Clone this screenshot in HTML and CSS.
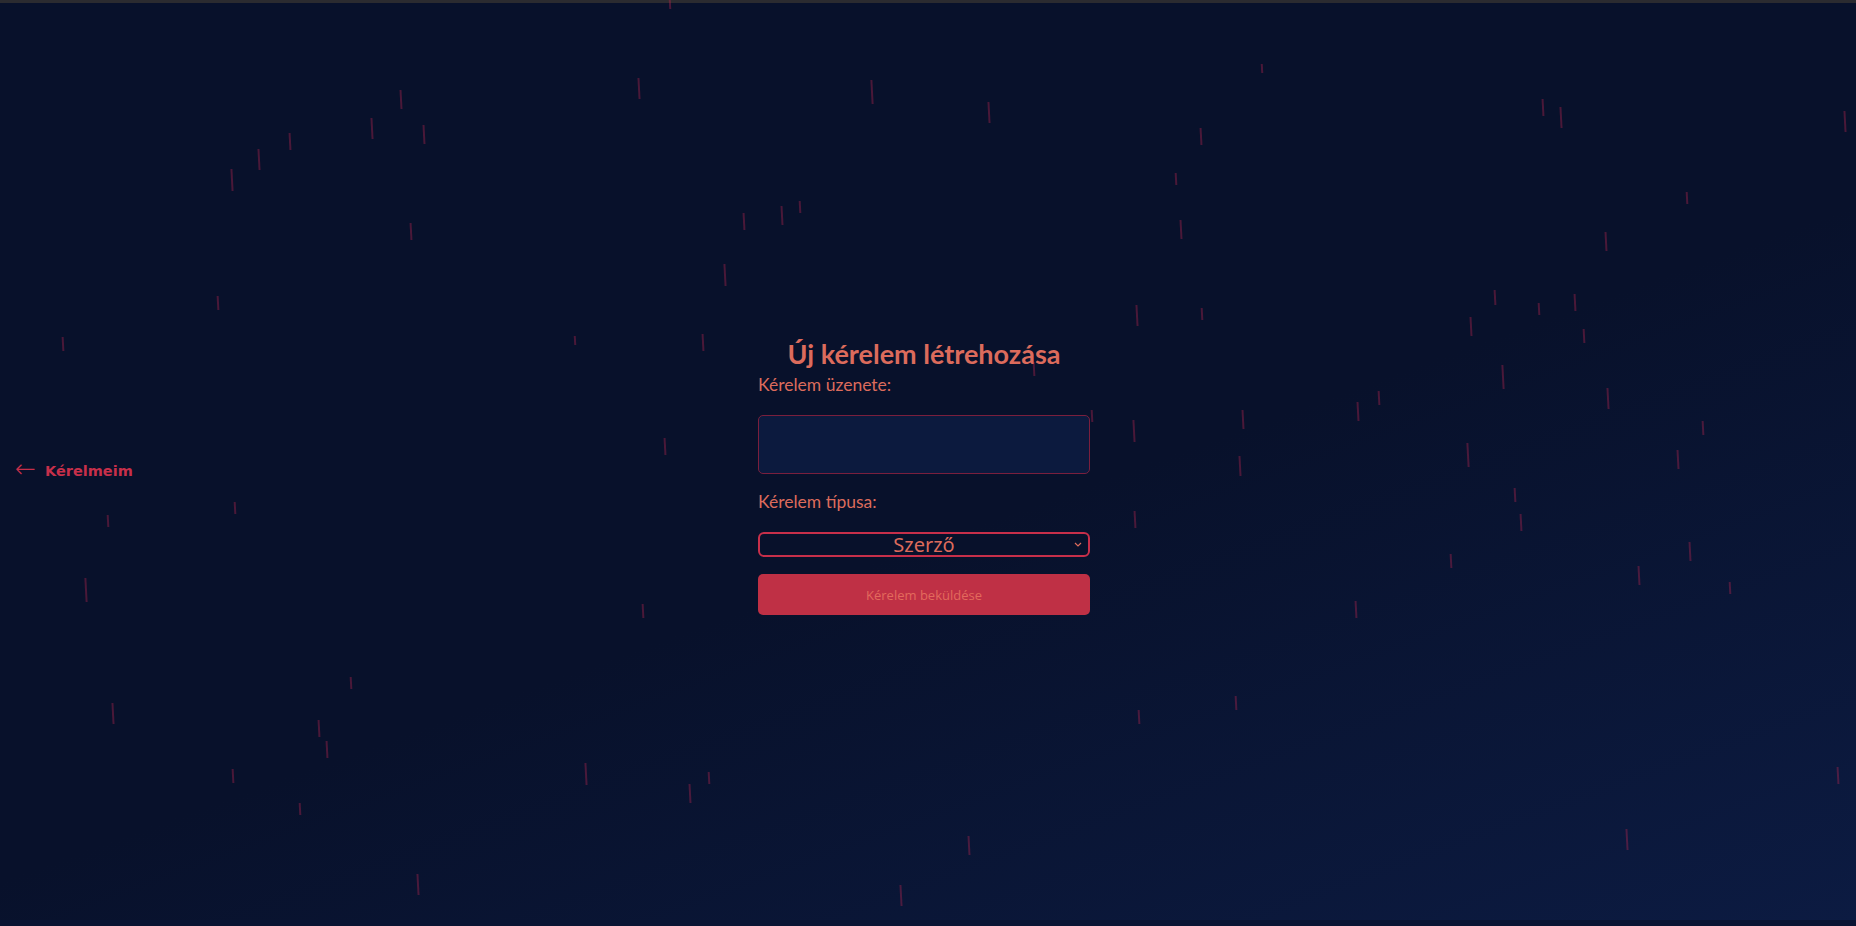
FILE: index.html
```html
<!DOCTYPE html>
<html lang="hu">
<head>
<meta charset="utf-8">
<title>Új kérelem</title>
<link rel="stylesheet" href="styles.css">
</head>
<body>
<div class="topbar"></div>
<div class="rain">
<span class="drop" style="left:669px;top:0px;height:9px"></span>
<span class="drop" style="left:400px;top:90px;height:19px"></span>
<span class="drop" style="left:638px;top:78px;height:21px"></span>
<span class="drop" style="left:871px;top:80px;height:24px"></span>
<span class="drop" style="left:988px;top:102px;height:21px"></span>
<span class="drop" style="left:1261px;top:64px;height:9px"></span>
<span class="drop" style="left:371px;top:118px;height:21px"></span>
<span class="drop" style="left:423px;top:125px;height:19px"></span>
<span class="drop" style="left:289px;top:133px;height:17px"></span>
<span class="drop" style="left:258px;top:149px;height:21px"></span>
<span class="drop" style="left:231px;top:169px;height:22px"></span>
<span class="drop" style="left:1200px;top:128px;height:17px"></span>
<span class="drop" style="left:1542px;top:99px;height:17px"></span>
<span class="drop" style="left:1560px;top:107px;height:21px"></span>
<span class="drop" style="left:1844px;top:111px;height:21px"></span>
<span class="drop" style="left:1175px;top:173px;height:12px"></span>
<span class="drop" style="left:781px;top:206px;height:19px"></span>
<span class="drop" style="left:799px;top:201px;height:12px"></span>
<span class="drop" style="left:743px;top:213px;height:17px"></span>
<span class="drop" style="left:410px;top:223px;height:17px"></span>
<span class="drop" style="left:1180px;top:220px;height:19px"></span>
<span class="drop" style="left:1686px;top:192px;height:12px"></span>
<span class="drop" style="left:1605px;top:232px;height:19px"></span>
<span class="drop" style="left:724px;top:264px;height:22px"></span>
<span class="drop" style="left:217px;top:296px;height:14px"></span>
<span class="drop" style="left:1494px;top:290px;height:15px"></span>
<span class="drop" style="left:1538px;top:303px;height:12px"></span>
<span class="drop" style="left:1574px;top:294px;height:17px"></span>
<span class="drop" style="left:1136px;top:305px;height:21px"></span>
<span class="drop" style="left:1201px;top:308px;height:12px"></span>
<span class="drop" style="left:1470px;top:317px;height:19px"></span>
<span class="drop" style="left:62px;top:337px;height:14px"></span>
<span class="drop" style="left:574px;top:336px;height:9px"></span>
<span class="drop" style="left:702px;top:334px;height:17px"></span>
<span class="drop" style="left:1583px;top:329px;height:14px"></span>
<span class="drop" style="left:1033px;top:362px;height:14px"></span>
<span class="drop" style="left:1502px;top:365px;height:24px"></span>
<span class="drop" style="left:1091px;top:410px;height:12px"></span>
<span class="drop" style="left:1242px;top:410px;height:19px"></span>
<span class="drop" style="left:1357px;top:402px;height:19px"></span>
<span class="drop" style="left:1378px;top:391px;height:14px"></span>
<span class="drop" style="left:1607px;top:388px;height:21px"></span>
<span class="drop" style="left:1133px;top:420px;height:22px"></span>
<span class="drop" style="left:1702px;top:421px;height:14px"></span>
<span class="drop" style="left:664px;top:438px;height:17px"></span>
<span class="drop" style="left:1467px;top:443px;height:24px"></span>
<span class="drop" style="left:1677px;top:450px;height:19px"></span>
<span class="drop" style="left:1239px;top:456px;height:20px"></span>
<span class="drop" style="left:234px;top:502px;height:12px"></span>
<span class="drop" style="left:107px;top:515px;height:12px"></span>
<span class="drop" style="left:1514px;top:488px;height:14px"></span>
<span class="drop" style="left:1520px;top:514px;height:17px"></span>
<span class="drop" style="left:1134px;top:511px;height:17px"></span>
<span class="drop" style="left:1689px;top:542px;height:19px"></span>
<span class="drop" style="left:1450px;top:554px;height:14px"></span>
<span class="drop" style="left:1638px;top:566px;height:19px"></span>
<span class="drop" style="left:1729px;top:582px;height:12px"></span>
<span class="drop" style="left:85px;top:578px;height:24px"></span>
<span class="drop" style="left:642px;top:604px;height:14px"></span>
<span class="drop" style="left:1355px;top:601px;height:17px"></span>
<span class="drop" style="left:350px;top:677px;height:12px"></span>
<span class="drop" style="left:112px;top:703px;height:21px"></span>
<span class="drop" style="left:1235px;top:696px;height:14px"></span>
<span class="drop" style="left:1138px;top:710px;height:14px"></span>
<span class="drop" style="left:318px;top:720px;height:17px"></span>
<span class="drop" style="left:326px;top:741px;height:17px"></span>
<span class="drop" style="left:232px;top:769px;height:14px"></span>
<span class="drop" style="left:585px;top:763px;height:22px"></span>
<span class="drop" style="left:708px;top:772px;height:12px"></span>
<span class="drop" style="left:689px;top:784px;height:19px"></span>
<span class="drop" style="left:299px;top:803px;height:12px"></span>
<span class="drop" style="left:1837px;top:767px;height:17px"></span>
<span class="drop" style="left:968px;top:836px;height:19px"></span>
<span class="drop" style="left:1626px;top:829px;height:21px"></span>
<span class="drop" style="left:417px;top:874px;height:21px"></span>
<span class="drop" style="left:900px;top:885px;height:21px"></span>
</div>
<main class="page">
  <div class="side">
    <a class="back-link" href="#"><span class="arrow">←</span><span>Kérelmeim</span></a>
  </div>
  <form class="request-form">
    <h2 class="form-title">Új kérelem létrehozása</h2>
    <label class="form-label" for="msg">Kérelem üzenete:</label>
    <textarea id="msg" class="form-textarea"></textarea>
    <label class="form-label" for="type">Kérelem típusa:</label>
    <select id="type" class="form-select">
      <option>Szerző</option>
    </select>
    <button type="button" class="submit-btn">Kérelem beküldése</button>
  </form>
  <div class="side"></div>
</main>
<div class="bottombar"></div>
</body>
</html>
```

FILE: styles.css
```css
* { box-sizing: border-box; }

html, body {
  margin: 0;
  height: 100%;
}

body {
  display: flex;
  flex-direction: column;
  overflow: hidden;
  position: relative;
  background: linear-gradient(160deg, #08112b 0%, #08112b 55%, #0c1b42 100%);
  font-family: Lato, "Open Sans", sans-serif;
}

.topbar {
  height: 3px;
  background: #2b2b30;
  flex: none;
}

.bottombar {
  height: 6px;
  background: #0a1433;
  flex: none;
}

.rain {
  position: absolute;
  inset: 0;
  pointer-events: none;
  z-index: 0;
}

.drop {
  position: absolute;
  width: 2px;
  background: rgba(190, 40, 80, 0.36);
  transform: rotate(-3deg);
}

.page {
  flex: 1;
  display: grid;
  grid-template-columns: 1fr 332px 1fr;
  align-items: center;
  padding-top: 18px;
  padding-right: 8px;
  position: relative;
  z-index: 1;
}

.side {
  display: flex;
  align-items: center;
}

.back-link {
  display: flex;
  align-items: center;
  gap: 9px;
  margin-left: 15px;
  color: #c72f4a;
  text-decoration: none;
  font-family: "DejaVu Sans", sans-serif;
  font-weight: bold;
  font-size: 14.5px;
}

.back-link .arrow {
  font-family: "DejaVu Sans", sans-serif;
  font-weight: 200;
  font-size: 25px;
  line-height: 1;
  margin-top: -4px;
}

.request-form {
  display: flex;
  flex-direction: column;
  padding-top: 12px;
}

.form-title {
  margin: 0 0 6px;
  text-align: center;
  font-family: Lato, sans-serif;
  font-weight: bold;
  font-size: 27px;
  line-height: 31px;
  color: #dc6b5c;
}

.form-label {
  font-family: Lato, sans-serif;
  font-size: 17.5px;
  line-height: 20px;
  color: #dc6b5c;
  margin-bottom: 20px;
}

.form-textarea {
  height: 59px;
  width: 100%;
  margin: 0 0 18px;
  background: #0c1a3e;
  border: 1px solid #7a1f3d;
  border-radius: 5px;
  color: #dc6b5c;
  resize: none;
}

.form-select {
  -webkit-appearance: none;
  appearance: none;
  height: 25px;
  width: 100%;
  margin: 0 0 17px;
  background: #08112b url("data:image/svg+xml,%3Csvg xmlns='http://www.w3.org/2000/svg' width='8' height='5' viewBox='0 0 8 5'%3E%3Cpath d='M1 1l3 3 3-3' fill='none' stroke='%23dc6b5c' stroke-width='1.2'/%3E%3C/svg%3E") no-repeat right 6px center;
  border: 2px solid #c72f4a;
  border-radius: 6px;
  color: #dc6b5c;
  font-family: "Noto Sans", sans-serif;
  font-size: 20px;
  line-height: 21px;
  text-align: center;
  text-align-last: center;
  padding: 0;
}

.submit-btn {
  height: 41px;
  width: 100%;
  border: none;
  border-radius: 5px;
  background: #bf3045;
  color: #e36a5c;
  font-family: "Open Sans", sans-serif;
  font-size: 13px;
  cursor: pointer;
}
```
